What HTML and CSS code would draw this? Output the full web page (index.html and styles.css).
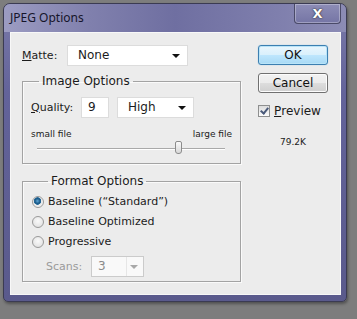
FILE: index.html
```html
<!DOCTYPE html>
<html lang="en">
<head>
  <meta charset="UTF-8" />
  <title>JPEG Options</title>
  <link rel="stylesheet" href="styles.css">
</head>
<body>

<div class="window">
  <!-- Barre de titre -->
  <div class="titlebar">
    <span class="title">JPEG Options</span>
    <button class="close">X</button>
  </div>

  <div class="client">
    <div class="left">
      <div class="row matte-row">
        <span class="label"><u>M</u>atte:</span>
        <div class="select matte">None<span class="arrow"></span></div>
      </div>

      <fieldset class="group image-group">
        <legend>Image Options</legend>
        <div class="row quality-row">
          <span class="label"><u>Q</u>uality:</span>
          <div class="input">9</div>
          <div class="select high">High<span class="arrow"></span></div>
        </div>
        <div class="scale">
          <span>small file</span>
          <span>large file</span>
        </div>
        <div class="slider">
          <div class="track"></div>
          <div class="thumb"></div>
        </div>
      </fieldset>

      <fieldset class="group format-group">
        <legend>Format Options</legend>
        <div class="radio checked">Baseline (“Standard”)</div>
        <div class="radio">Baseline Optimized</div>
        <div class="radio">Progressive</div>
        <div class="row scans-row">
          <span class="label disabled">Scans:</span>
          <div class="select scans">3<span class="arrow"></span></div>
        </div>
      </fieldset>
    </div>

    <div class="right">
      <button class="btn default">OK</button>
      <button class="btn">Cancel</button>
      <label class="check"><span class="box"></span><u>P</u>review</label>
      <div class="size">79.2K</div>
    </div>
  </div>
</div>

</body>
</html>
```

FILE: styles.css
```css
body {
  margin: 0;
  width: 357px;
  height: 319px;
  background: #7d7d7d;
  font-family: "DejaVu Sans", sans-serif;
  font-size: 11px;
  line-height: 14px;
  color: #1b1b1b;
  overflow: hidden;
}

/* Cadre de la fenêtre */
.window {
  margin: 3px 0 0 3px;
  width: 342px;
  height: 297px;
  border: 1px solid #3b3b52;
  border-radius: 7px 7px 5px 5px;
  background: linear-gradient(to bottom, #7a7aa8, #63639a 30%, #5a5a8c);
  box-shadow: 1px 2px 3px rgba(0, 0, 0, 0.35);
}

.titlebar {
  height: 28px;
  display: flex;
  align-items: flex-start;
  justify-content: space-between;
  background: linear-gradient(to right, #9c9cc2, #8080ad 25%, #6f6fa1 50%, #7f7fad 80%, #8c8cb5);
  border-radius: 6px 6px 0 0;
}

.title {
  padding: 7px 0 0 6px;
  font-family: "Noto Sans", sans-serif;
  font-size: 12px;
  color: #15152a;
}

.close {
  margin: 0 5px 0 0;
  width: 47px;
  height: 20px;
  border: 1px solid #4a4a68;
  border-top: none;
  border-radius: 0 0 4px 4px;
  background: linear-gradient(to bottom, #8d8db6, #7575a5);
  box-shadow: inset 0 0 0 1px rgba(255, 255, 255, 0.3);
  color: #fff;
  font-family: "DejaVu Sans", sans-serif;
  font-weight: bold;
  font-size: 13px;
  line-height: 17px;
  padding: 0;
  text-shadow: 0 0 2px #333, 0 0 1px #333;
}

/* Zone cliente */
.client {
  margin: 0 5px 0 6px;
  height: 263px;
  background: #ececec;
  border: 1px solid #f8f8f8;
  box-sizing: border-box;
  display: flex;
  padding: 12px 0 0 11px;
}

.left {
  width: 219px;
}

.row {
  display: flex;
  align-items: center;
}

.select {
  position: relative;
  box-sizing: border-box;
  height: 21px;
  background: #fff;
  border: 1px solid #dcdcdc;
  padding: 0 0 0 10px;
  line-height: 19px;
  font-size: 12px;
}

.arrow {
  position: absolute;
  right: 7px;
  top: 8px;
  width: 0;
  height: 0;
  border-left: 4px solid transparent;
  border-right: 4px solid transparent;
  border-top: 4px solid #111;
}

.matte-row .label {
  width: 45px;
}

.matte {
  width: 121px;
}

/* Groupes */
.group {
  margin: 0;
  padding: 0;
  border: 1px solid #a3a3a3;
  box-shadow: 1px 1px 0 #fafafa, inset 1px 1px 0 #fafafa;
  box-sizing: border-box;
  font-size: 11px;
}

.group legend {
  margin-left: 16px;
  padding: 0 3px;
  line-height: 14px;
  font-size: 12px;
}

.image-group {
  margin-top: 8px;
  height: 90px;
}

.quality-row {
  margin: 9px 0 0 8px;
}

.quality-row .label {
  width: 50px;
}

.input {
  box-sizing: border-box;
  width: 28px;
  height: 21px;
  background: #fff;
  border: 1px solid #dcdcdc;
  padding-left: 6px;
  line-height: 19px;
  font-size: 12px;
}

.high {
  margin-left: 8px;
  width: 77px;
}

.scale {
  display: flex;
  justify-content: space-between;
  margin: 10px 8px 0 8px;
  font-size: 9px;
  line-height: 12px;
}

.slider {
  position: relative;
  margin: 1px 15px 0 14px;
  height: 14px;
}

.track {
  padding-top: 6px;
  height: 1px;
  border-bottom: 1px solid #a9a9a9;
  box-shadow: 0 1px 0 #fff;
}

.thumb {
  position: absolute;
  left: 138px;
  top: 0;
  width: 7px;
  height: 13px;
  box-sizing: border-box;
  border: 1px solid #8c8c8c;
  border-radius: 2px 2px 3px 3px;
  background: linear-gradient(to bottom, #fafafa, #d8d8d8);
}

.format-group {
  margin-top: 10px;
  height: 108px;
  padding: 4px 0 0 9px;
}

.radio {
  display: flex;
  align-items: center;
  height: 20px;
}

.radio::before {
  content: "";
  width: 12px;
  height: 12px;
  box-sizing: border-box;
  margin-right: 4px;
  border: 1px solid #9a9a9a;
  border-radius: 50%;
  background: radial-gradient(circle at 50% 40%, #fafafa, #dcdcdc);
}

.radio.checked::before {
  background: radial-gradient(circle at 45% 40%, #5fa8d8 0, #1c5a88 2.5px, #2b6f9e 3.5px, #e9e9e9 4px, #fafafa);
}

.scans-row {
  margin: 4px 0 0 14px;
}

.label.disabled {
  color: #9a9a9a;
  width: 45px;
}

.scans {
  width: 53px;
  background: #f9f9f9;
  border-color: #cbcbcb;
  color: #8a8a8a;
  padding-left: 6px;
}

.scans::after {
  content: "";
  position: absolute;
  right: 16px;
  top: 0;
  bottom: 0;
  border-left: 1px solid #e6e6e6;
}

.scans .arrow {
  border-top-color: #a8a8a8;
  right: 5px;
}

/* Colonne de droite */
.right {
  margin-left: 17px;
  width: 70px;
  display: flex;
  flex-direction: column;
}

.btn {
  width: 70px;
  height: 20px;
  padding: 0;
  border: 1px solid #707070;
  border-radius: 3px;
  background: linear-gradient(to bottom, #f2f2f2 0, #ebebeb 50%, #dddddd 51%, #cfcfcf 100%);
  box-shadow: inset 0 0 0 1px #fcfcfc;
  font-family: "DejaVu Sans", sans-serif;
  font-size: 12px;
  color: #111;
  line-height: 17px;
}

.btn.default {
  border-color: #3c7fb1;
  background: linear-gradient(to bottom, #eaf6fd 0, #d9f0fc 50%, #bee6fd 51%, #a7d9f5 100%);
  box-shadow: inset 0 0 0 1px #b9e4f8, 0 0 1px #6ab7e6;
  margin-bottom: 8px;
}

.check {
  display: flex;
  align-items: center;
  margin-top: 11px;
  font-size: 12px;
}

.box {
  position: relative;
  width: 12px;
  height: 12px;
  box-sizing: border-box;
  margin-right: 4px;
  border: 1px solid #8e8f8f;
  background: linear-gradient(to bottom, #dcdcdc, #fcfcfc);
}

.box::after {
  content: "";
  position: absolute;
  left: 3px;
  top: 0;
  width: 3px;
  height: 6px;
  border-right: 2px solid #4a5a7a;
  border-bottom: 2px solid #4a5a7a;
  transform: rotate(40deg);
}

.size {
  margin-top: 17px;
  text-align: center;
  font-size: 9px;
}
```
